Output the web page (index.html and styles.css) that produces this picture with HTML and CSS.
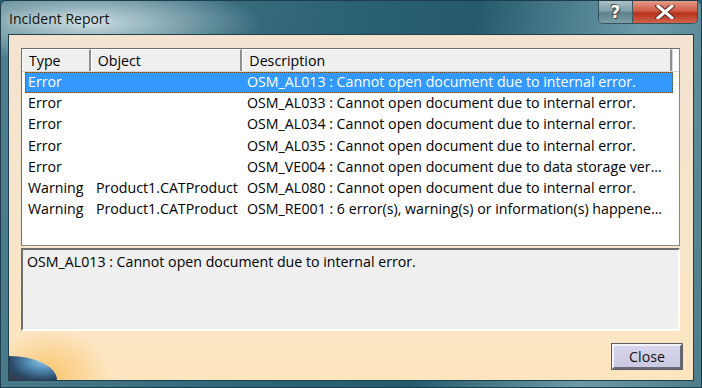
FILE: index.html
```html
<!DOCTYPE html>
<html lang="en">
<head>
    <meta charset="UTF-8">
    <title>Incident Report</title>
    <link rel="stylesheet" href="styles.css">
</head>
<body>
<div class="window">
    <div class="titlebar">
        <span class="title">Incident Report</span>
        <div class="caption-buttons">
            <div class="cap-btn help-btn">?</div>
            <div class="cap-btn close-btn">
                <svg width="20" height="14" viewBox="0 0 20 14">
                    <path d="M3 1 L17 13 M17 1 L3 13" stroke="#5a2a20" stroke-width="5" stroke-linecap="square"/>
                    <path d="M3 1 L17 13 M17 1 L3 13" stroke="#ffffff" stroke-width="3" stroke-linecap="square"/>
                </svg>
            </div>
        </div>
    </div>

    <div class="client">
        <div class="listview">
            <div class="header">
                <div class="hcell col-type">Type</div>
                <div class="hcell col-object">Object</div>
                <div class="hcell col-desc">Description</div>
                <div class="hcell col-rest"></div>
            </div>
            <div class="rows">
                <div class="row selected">
                    <div class="cell col-type">Error</div>
                    <div class="cell col-object"></div>
                    <div class="cell col-desc">OSM_AL013 : Cannot open document due to internal error.</div>
                </div>
                <div class="row">
                    <div class="cell col-type">Error</div>
                    <div class="cell col-object"></div>
                    <div class="cell col-desc">OSM_AL033 : Cannot open document due to internal error.</div>
                </div>
                <div class="row">
                    <div class="cell col-type">Error</div>
                    <div class="cell col-object"></div>
                    <div class="cell col-desc">OSM_AL034 : Cannot open document due to internal error.</div>
                </div>
                <div class="row">
                    <div class="cell col-type">Error</div>
                    <div class="cell col-object"></div>
                    <div class="cell col-desc">OSM_AL035 : Cannot open document due to internal error.</div>
                </div>
                <div class="row">
                    <div class="cell col-type">Error</div>
                    <div class="cell col-object"></div>
                    <div class="cell col-desc">OSM_VE004 : Cannot open document due to data storage ver...</div>
                </div>
                <div class="row">
                    <div class="cell col-type">Warning</div>
                    <div class="cell col-object">Product1.CATProduct</div>
                    <div class="cell col-desc">OSM_AL080 : Cannot open document due to internal error.</div>
                </div>
                <div class="row">
                    <div class="cell col-type">Warning</div>
                    <div class="cell col-object">Product1.CATProduct</div>
                    <div class="cell col-desc">OSM_RE001 : 6 error(s), warning(s) or information(s) happene...</div>
                </div>
            </div>
        </div>

        <div class="details">OSM_AL013 : Cannot open document due to internal error.</div>

        <div class="footer">
            <button class="close-button">Close</button>
        </div>

        <div class="planet"></div>
    </div>
</div>
</body>
</html>
```

FILE: styles.css
```css
body {
    margin: 0;
    font-family: "Open Sans", "Noto Sans", sans-serif;
    font-size: 14.2px;
    color: #000;
    background: #2a5d6f;
}

.window {
    width: 702px;
    height: 388px;
    box-sizing: border-box;
    display: flex;
    flex-direction: column;
    background:
        radial-gradient(ellipse 170px 40px at 90px 22px, rgba(220, 235, 238, 0.85), rgba(220, 235, 238, 0) 100%),
        linear-gradient(100deg, #4f7f8e 0%, #3f7283 22%, #2b6274 45%, #245a6c 62%, #6c9aa8 84%, #4d7c8b 100%);
    border: 1px solid #1d3d4a;
    border-radius: 6px 6px 0 0;
}

.titlebar {
    height: 33px;
    display: flex;
    justify-content: space-between;
    align-items: flex-start;
    flex-shrink: 0;
}

.title {
    margin: 8px 0 0 8px;
    font-size: 14px;
    color: #111;
    text-shadow: 0 0 8px rgba(255, 255, 255, 0.9);
}

.caption-buttons {
    display: flex;
    margin-right: 3px;
    border: 1px solid #34525c;
    border-top: none;
    border-radius: 0 0 5px 5px;
    overflow: hidden;
}

.cap-btn {
    height: 22px;
    display: flex;
    align-items: center;
    justify-content: center;
}

.help-btn {
    width: 33px;
    background: linear-gradient(#a9c0c7 0%, #7d9ea8 45%, #5c808b 55%, #7e9fa8 100%);
    border-right: 1px solid #3c5860;
    font-family: "DejaVu Sans", sans-serif;
    font-weight: bold;
    font-size: 17px;
    color: #fff;
    text-shadow: 0 0 1px #333, 1px 1px 0 #444, -1px -1px 0 #555;
}

.close-btn {
    width: 64px;
    background: linear-gradient(#e39a89 0%, #cf5b45 45%, #b5311c 55%, #d2644c 100%);
}

.client {
    position: relative;
    flex: 1;
    margin: 0 7px 7px 7px;
    padding: 13px 13px 11px 12px;
    display: flex;
    flex-direction: column;
    border: 1px solid #1f3f4b;
    background:
        radial-gradient(ellipse 60px 45px at 40px 340px, rgba(250, 190, 90, 0.8), rgba(250, 190, 90, 0) 100%),
        linear-gradient(#f3e3d0 0%, #f7e5cc 50%, #fde5bf 100%);
}

.listview {
    height: 198px;
    box-sizing: border-box;
    background: #fff;
    border: 1px solid #828790;
    border-top-color: #6d6d6d;
    border-left-color: #6d6d6d;
    overflow: hidden;
}

.header {
    display: flex;
    height: 23px;
    box-sizing: border-box;
    background: #efefef;
    border-bottom: 1px solid #d5d5d5;
}

.hcell {
    box-sizing: border-box;
    padding: 0 0 0 6px;
    line-height: 21px;
    border-right: 2px solid #8e8e8e;
    border-left: 1px solid #fff;
    border-top: 1px solid #fff;
    white-space: nowrap;
}

.hcell.col-rest {
    flex: 1;
    border-right: none;
    background: #fff;
    border-left: 1px solid #d8d8d8;
}

.col-type {
    width: 69px;
}

.col-object {
    width: 152px;
}

.col-desc {
    width: 431px;
}

.rows {
    padding: 0 0 0 3px;
}

.row {
    display: flex;
    height: 21.2px;
    width: 648px;
    box-sizing: border-box;
    border: 1px dotted transparent;
}

.row.selected {
    background: #3399ff;
    color: #fff;
    border-color: #6a4a1a;
}

.cell {
    box-sizing: border-box;
    padding: 0 0 0 2px;
    line-height: 18px;
    white-space: nowrap;
    overflow: hidden;
}

.row .col-type {
    width: 66px;
}

.row .col-object {
    width: 152px;
    padding-left: 4px;
}

.row .col-desc {
    flex: 1;
    padding-left: 3px;
}

.details {
    height: 83px;
    margin-top: 2px;
    box-sizing: border-box;
    padding: 2px 0 0 4px;
    background: #efefef;
    border: 2px solid #fff;
    border-top-color: #6d6d6d;
    border-left-color: #6d6d6d;
}

.footer {
    display: flex;
    justify-content: flex-end;
    padding-top: 13px;
    margin-right: -2px;
}

.close-button {
    width: 70px;
    height: 25px;
    font-family: "Open Sans", sans-serif;
    font-size: 14.2px;
    color: #111;
    background: linear-gradient(#d8d6ec, #cbc9e2);
    border: 2px solid;
    border-color: #f4f4fb #6b6b78 #6b6b78 #f4f4fb;
    outline: 1px solid #5d5d66;
    padding: 0;
}

.planet {
    position: absolute;
    left: 0;
    bottom: 0;
    width: 48px;
    height: 24px;
    border-top-right-radius: 48px 24px;
    background: radial-gradient(ellipse at 70% 20%, #8ec6e8 0%, #4e88b0 35%, #2a4664 70%, #3a3a44 100%);
}
```
